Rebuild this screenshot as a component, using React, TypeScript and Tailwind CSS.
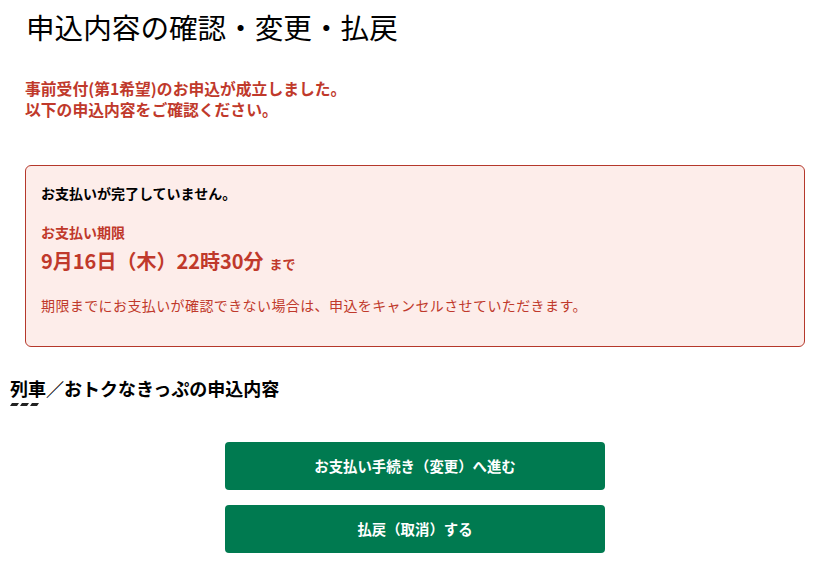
export default function App() {
  return (
    <div
      className="w-[826px] h-[584px] bg-white overflow-hidden text-[#1a1a1a]"
      style={{ fontFamily: '"Noto Sans CJK JP", "Noto Sans", sans-serif' }}
    >
      {/* Page title */}
      <h1 className="pl-[26px] pt-[9px] text-[28.6px] leading-[36px] font-normal text-black">
        申込内容の確認・変更・払戻
      </h1>

      {/* Result message */}
      <div className="pl-[25px] mt-[33px] text-[15.8px] leading-[21px] font-bold text-[#c0392b]">
        <p>事前受付(第1希望)のお申込が成立しました。</p>
        <p>以下の申込内容をご確認ください。</p>
      </div>

      {/* Payment notice */}
      <div className="mx-[25px] w-[780px] mt-[45px] h-[182px] rounded-[6px] border border-[#b5382b] bg-[#fdedea] px-[15px] pt-[16px]">
        <p className="text-[14px] leading-[22px] font-bold text-black">お支払いが完了していません。</p>
        <p className="mt-[17px] text-[14px] leading-[22px] font-bold text-[#c0392b]">お支払い期限</p>
        <p className="mt-[4px] leading-[28px] font-bold text-[#c0392b]">
          <span className="text-[20px]">9月16日（木）22時30分</span>
          <span className="ml-[6px] text-[13px]">まで</span>
        </p>
        <p className="mt-[16px] text-[14px] tracking-[0.4px] leading-[22px] text-[#c0392b]">
          期限までにお支払いが確認できない場合は、申込をキャンセルさせていただきます。
        </p>
      </div>

      {/* Section heading */}
      <div className="pl-[10px] mt-[29px]">
        <h2 className="text-[18px] leading-[24px] font-bold text-black">列車／おトクなきっぷの申込内容</h2>
        <svg width="32" height="4" viewBox="0 0 32 4" className="block mt-[3px]">
          <polygon points="2,0 9,0 7,3 0,3" fill="#222" />
          <polygon points="12,0 19,0 17,3 10,3" fill="#222" />
          <polygon points="22,0 29,0 27,3 20,3" fill="#222" />
        </svg>
      </div>

      {/* Actions */}
      <div className="mt-[35px] flex flex-col items-center gap-[15px] pl-[4px]">
        <button className="w-[380px] h-[48px] rounded-[4px] bg-[#007a50] text-white text-[14.4px] font-bold">
          お支払い手続き（変更）へ進む
        </button>
        <button className="w-[380px] h-[48px] rounded-[4px] bg-[#007a50] text-white text-[14.4px] font-bold">
          払戻（取消）する
        </button>
      </div>
    </div>
  );
}
